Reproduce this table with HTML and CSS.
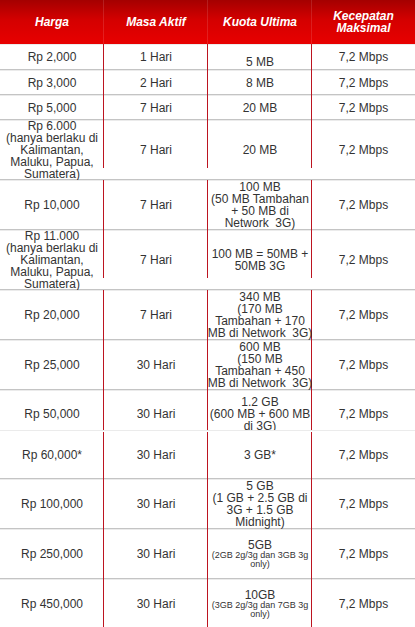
FILE: index.html
```html
<!DOCTYPE html>
<html>
<head>
<meta charset="utf-8">
<title>Paket Ultima</title>
<link rel="stylesheet" href="styles.css">
</head>
<body>
<table class="paket">
  <colgroup><col class="w1"><col class="w1"><col class="w1"><col class="w4"></colgroup>
  <thead>
    <tr><th>Harga</th><th>Masa Aktif</th><th>Kuota Ultima</th><th>Kecepatan Maksimal</th></tr>
  </thead>
  <tbody>
    <tr class="h26"><td>Rp 2,000</td><td>1 Hari</td><td><span class="low">5 MB</span></td><td>7,2 Mbps</td></tr>
    <tr class="h25"><td>Rp 3,000</td><td>2 Hari</td><td>8 MB</td><td>7,2 Mbps</td></tr>
    <tr class="h25"><td>Rp 5,000</td><td>7 Hari</td><td>20 MB</td><td>7,2 Mbps</td></tr>
    <tr class="h60 short"><td>Rp 6.000<br>(hanya berlaku di<br>Kalimantan,<br>Maluku, Papua,<br>Sumatera)</td><td>7 Hari</td><td>20 MB</td><td>7,2 Mbps</td></tr>
    <tr class="h50"><td>Rp 10,000</td><td>7 Hari</td><td>100 MB<br>(50 MB Tambahan<br>+ 50 MB di<br>Network&nbsp; 3G)</td><td>7,2 Mbps</td></tr>
    <tr class="h60 short"><td>Rp 11.000<br>(hanya berlaku di<br>Kalimantan,<br>Maluku, Papua,<br>Sumatera)</td><td>7 Hari</td><td>100 MB = 50MB +<br>50MB 3G</td><td>7,2 Mbps</td></tr>
    <tr class="h50"><td>Rp 20,000</td><td>7 Hari</td><td>340 MB<br>(170 MB<br>Tambahan + 170<br><span class="wide">MB di Network&nbsp; 3G)</span></td><td>7,2 Mbps</td></tr>
    <tr class="h50"><td>Rp 25,000</td><td>30 Hari</td><td>600 MB<br>(150 MB<br>Tambahan + 450<br><span class="wide">MB di Network&nbsp; 3G)</span></td><td>7,2 Mbps</td></tr>
    <tr class="h40 cut"><td><div class="clip">Rp 50,000</div></td><td><div class="clip">30 Hari</div></td><td><div class="clip"><span>1.2 GB</span><span>(600 MB + 600 MB</span><span>di 3G)</span></div></td><td><div class="clip">7,2 Mbps</div></td></tr>
    <tr class="h49 after"><td>Rp 60,000*</td><td>30 Hari</td><td>3 GB*</td><td>7,2 Mbps</td></tr>
    <tr class="h50"><td>Rp 100,000</td><td>30 Hari</td><td>5 GB<br>(1 GB + 2.5 GB di<br>3G + 1.5 GB<br>Midnight)</td><td>7,2 Mbps</td></tr>
    <tr class="h50"><td>Rp 250,000</td><td>30 Hari</td><td>5GB<span class="sm">(2GB 2g/3g dan 3GB 3g<br>only)</span></td><td>7,2 Mbps</td></tr>
    <tr class="h50"><td>Rp 450,000</td><td>30 Hari</td><td>10GB<span class="sm">(3GB 2g/3g dan 7GB 3g<br>only)</span></td><td>7,2 Mbps</td></tr>
  </tbody>
</table>
</body>
</html>
```

FILE: styles.css
```css
body {
  margin: 0;
  background: #fff;
}

.paket {
  width: 415px;
  table-layout: fixed;
  border-collapse: separate;
  border-spacing: 0;
  font-family: "Liberation Sans", Arial, sans-serif;
  font-size: 12px;
  line-height: 12px;
  color: #333;
}

.w1 { width: 104px; }
.w4 { width: 103px; }

.paket th {
  height: 44px;
  padding: 0;
  color: #fff;
  font-style: italic;
  font-weight: bold;
  text-align: center;
  vertical-align: middle;
  background: linear-gradient(to bottom, #a40000 0%, #d40000 45%, #e80000 100%);
}

.paket th:not(:last-child) {
  box-shadow: inset -1px 0 0 rgba(255, 255, 255, 0.12);
}

.paket td {
  padding: 0;
  text-align: center;
  vertical-align: middle;
  overflow: hidden;
  background-color: #fff;
  background-image:
    linear-gradient(#bc1420, #bc1420),
    linear-gradient(#c4c4c4, #c4c4c4),
    linear-gradient(#ebebeb, #ebebeb);
  background-repeat: no-repeat;
  background-position: right 0 top var(--rt, 0px), left bottom, left top;
  background-size: 1px var(--rh, 100%), 100% var(--gl, 1px), 100% 1px;
}

.paket td:last-child {
  --rh: 0px;
}

.h25 td { height: 25px; }
.h26 td { height: 26px; }
.h40 td { height: 40px; }
.h49 td { height: 49px; }
.h50 td { height: 50px; }
.h60 td { height: 60px; }

.short { --rh: 48px; }

.cut { --gl: 0px; }
.cut td { vertical-align: top; }

.after {
  --rt: 2px;
  --rh: calc(100% - 2px);
}

.clip {
  height: 40px;
  box-sizing: border-box;
  padding-top: 7px;
  display: flex;
  flex-direction: column;
  justify-content: center;
  align-items: center;
  overflow: hidden;
}

.low {
  display: block;
  padding-top: 10px;
}

.wide {
  display: block;
  margin: 0 -5px;
  white-space: nowrap;
}

.sm {
  display: block;
  font-size: 9px;
  line-height: 9px;
}
```
